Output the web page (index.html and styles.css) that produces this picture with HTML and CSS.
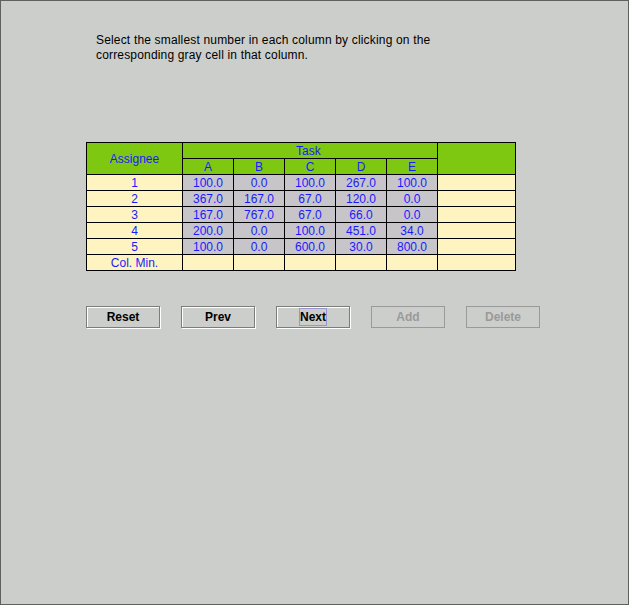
FILE: index.html
```html
<!DOCTYPE html>
<html>
<head>
<meta charset="utf-8">
<link rel="stylesheet" href="styles.css">
</head>
<body>
<div class="frame">
  <p class="intro">Select the smallest number in each column by clicking on the<br>corresponding gray cell in that column.</p>
  <table class="grid">
    <colgroup>
      <col class="c-assignee"><col class="c-task"><col class="c-task"><col class="c-task"><col class="c-task"><col class="c-task"><col class="c-extra">
    </colgroup>
    <tr class="head">
      <th rowspan="2">Assignee</th>
      <th colspan="5" class="task-title">Task</th>
      <th rowspan="2"></th>
    </tr>
    <tr class="head">
      <th>A</th><th>B</th><th>C</th><th>D</th><th>E</th>
    </tr>
    <tr><td class="label">1</td><td class="val">100.0</td><td class="val">0.0</td><td class="val">100.0</td><td class="val">267.0</td><td class="val">100.0</td><td class="label"></td></tr>
    <tr><td class="label">2</td><td class="val">367.0</td><td class="val">167.0</td><td class="val">67.0</td><td class="val">120.0</td><td class="val">0.0</td><td class="label"></td></tr>
    <tr><td class="label">3</td><td class="val">167.0</td><td class="val">767.0</td><td class="val">67.0</td><td class="val">66.0</td><td class="val">0.0</td><td class="label"></td></tr>
    <tr><td class="label">4</td><td class="val">200.0</td><td class="val">0.0</td><td class="val">100.0</td><td class="val">451.0</td><td class="val">34.0</td><td class="label"></td></tr>
    <tr><td class="label">5</td><td class="val">100.0</td><td class="val">0.0</td><td class="val">600.0</td><td class="val">30.0</td><td class="val">800.0</td><td class="label"></td></tr>
    <tr><td class="label">Col. Min.</td><td class="label"></td><td class="label"></td><td class="label"></td><td class="label"></td><td class="label"></td><td class="label"></td></tr>
  </table>
  <div class="buttons">
    <button class="btn">Reset</button>
    <button class="btn">Prev</button>
    <button class="btn"><span class="focus">Next</span></button>
    <button class="btn" disabled>Add</button>
    <button class="btn" disabled>Delete</button>
  </div>
</div>
</body>
</html>
```
FILE: styles.css
```css
html, body {
  margin: 0;
  padding: 0;
}
body {
  width: 629px;
  height: 605px;
  background: #cccecb;
  font-family: "Liberation Sans", Arial, sans-serif;
}
.frame {
  box-sizing: border-box;
  width: 629px;
  height: 605px;
  border: 1px solid #5f615f;
  padding: 32px 0 0 85px;
}
.intro {
  margin: 0 0 0 10px;
  font-size: 12px;
  line-height: 15px;
  letter-spacing: 0.17px;
  color: #000;
}
.grid {
  margin-top: 79px;
  border-collapse: collapse;
  table-layout: fixed;
  width: 429px;
  font-size: 12px;
  color: #1a1aff;
}
.c-assignee { width: 96px; }
.c-task { width: 51px; }
.c-extra { width: 78px; }
.grid th, .grid td {
  border: 1px solid #000;
  padding: 0;
  height: 15px;
  line-height: 14px;
  text-align: center;
  font-weight: normal;
  white-space: nowrap;
}
.grid th {
  background: #7ec811;
}
.grid .task-title {
  text-align: left;
  padding-left: 113px;
}
.grid .label {
  background: #fdf4c1;
}
.grid .val {
  background: #c7c5ca;
}
.buttons {
  display: flex;
  gap: 21px;
  margin: 35px 0 0 0;
}
.btn {
  box-sizing: border-box;
  width: 74px;
  height: 22px;
  padding: 0;
  background: #cccecb;
  border: 1px solid #7b7d7b;
  box-shadow: 1px 1px 0 #ffffff, inset 1px 1px 0 #ffffff;
  font-family: "Liberation Sans", Arial, sans-serif;
  font-weight: bold;
  font-size: 12px;
  color: #000;
}
.btn:disabled {
  color: #9a9a9a;
  border-color: #9a9a9a;
  box-shadow: none;
}
.focus {
  border: 1px solid #9a94d0;
  padding: 1px 0;
}
```
